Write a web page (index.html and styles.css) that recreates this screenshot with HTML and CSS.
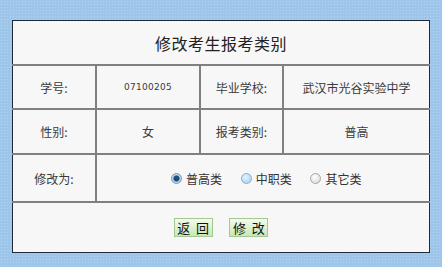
FILE: index.html
```html
<!DOCTYPE html>
<html>
<head>
<meta charset="utf-8">
<title>修改考生报考类别</title>
<link rel="stylesheet" href="styles.css">
</head>
<body>
<div class="wrapper">
  <table class="form-table">
    <tr class="row-title">
      <td colspan="4" class="title">修改考生报考类别</td>
    </tr>
    <tr class="row-a">
      <td class="label c1">学号:</td>
      <td class="value c2 num">07100205</td>
      <td class="label c3">毕业学校:</td>
      <td class="value c4">武汉市光谷实验中学</td>
    </tr>
    <tr class="row-b">
      <td class="label">性别:</td>
      <td class="value">女</td>
      <td class="label">报考类别:</td>
      <td class="value">普高</td>
    </tr>
    <tr class="row-c">
      <td class="label">修改为:</td>
      <td colspan="3" class="choices">
        <label class="choice"><span class="radio checked"></span>普高类</label>
        <label class="choice"><span class="radio hover"></span>中职类</label>
        <label class="choice"><span class="radio"></span>其它类</label>
      </td>
    </tr>
    <tr class="row-d">
      <td colspan="4" class="actions">
        <button class="btn">返&nbsp;&nbsp;回</button>
        <button class="btn">修&nbsp;&nbsp;改</button>
      </td>
    </tr>
  </table>
</div>
</body>
</html>
```

FILE: styles.css
```css
body {
  margin: 0;
  background-color: #9dc6ea;
  background-image: radial-gradient(#b3d4f1 0.6px, transparent 0.8px);
  background-size: 3px 3px;
  font-family: "Noto Sans CJK SC", "DejaVu Sans", sans-serif;
  color: #333;
}

.wrapper {
  padding: 20px 0 0 12px;
}

.form-table {
  width: 418px;
  border-collapse: collapse;
  background: #f7f7f7;
  border: 1px solid #1e2a36;
}

.form-table td {
  border: 2px solid #808080;
  text-align: center;
  font-size: 12px;
  padding: 0;
}

.row-title td { height: 43px; }
.row-a td { height: 42px; }
.row-b td { height: 43px; }
.row-c td { height: 46px; }
.row-d td { height: 49px; }

.form-table .title {
  font-size: 16px;
  color: #222;
  letter-spacing: 0.5px;
  border-top: 0;
}

.c1 { width: 82px; }
.c2 { width: 102px; }
.c3 { width: 81px; }

.form-table td.num {
  font-family: "DejaVu Sans", sans-serif;
  font-size: 9px;
  color: #666;
  letter-spacing: 0.3px;
}

.form-table td.label,
.form-table td.value { color: #3a3a3a; }

.form-table tr td:first-child { border-left: 0; }
.form-table tr td:last-child { border-right: 0; }
.form-table .row-d td { border-bottom: 0; }

.choices {
  padding-left: 74px !important;
  text-align: left !important;
}

.choice {
  display: inline-flex;
  align-items: center;
  gap: 4px;
  margin-right: 16px;
  font-size: 12px;
  color: #333;
}

.radio {
  width: 9px;
  height: 9px;
  border-radius: 50%;
  border: 1px solid #a8a8a8;
  background: radial-gradient(circle at 40% 35%, #ffffff, #d4d4d4);
}

.radio.hover {
  border-color: #7fb2dc;
  background: radial-gradient(circle at 40% 35%, #e6f4ff, #9ccbef);
}

.radio.checked {
  border-color: #6f9fc8;
  background: radial-gradient(circle, #1f4c7a 0 2.5px, #a9cdec 3.5px, #dcecf9);
}

.actions {
  vertical-align: middle;
  padding-left: 0;
}

.btn {
  width: 39px;
  height: 19px;
  padding: 0;
  margin: 0 7px;
  border: 1px solid #a5c695;
  background: linear-gradient(#f3fbec, #c9e8b4);
  font-family: "Noto Sans CJK SC", sans-serif;
  font-size: 13px;
  color: #111;
  line-height: 17px;
  cursor: pointer;
}
```
